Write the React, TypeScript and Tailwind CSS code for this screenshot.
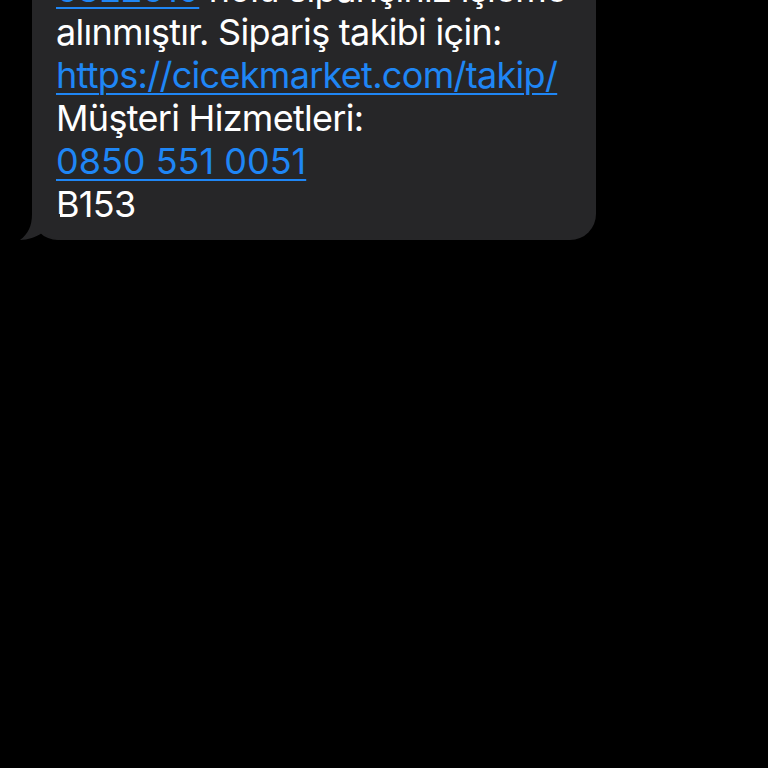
export default function App() {
  return (
    <div className="min-h-[768px] w-[768px] overflow-hidden bg-black font-['Inter',sans-serif]">
      <div className="relative ml-[32px] -mt-[42px] w-[564px] rounded-[26px] bg-[#262628] px-[24px] pt-[10px] pb-[14px] text-[36px] leading-[43px] tracking-[-0.7px] text-white">
        <p className="whitespace-nowrap">
          <a className="text-[#1f86f5] underline decoration-[2px] underline-offset-[5px]">6322610</a> nolu siparişiniz işleme
          <br />
          alınmıştır. Sipariş takibi için:
          <br />
          <a className="text-[#1f86f5] underline decoration-[2px] underline-offset-[5px]">https://cicekmarket.com/takip/</a>
          <br />
          Müşteri Hizmetleri:
          <br />
          <a className="text-[#1f86f5] tracking-[0px] underline decoration-[2px] underline-offset-[5px]">0850 551 0051</a>
          <br />
          B153
        </p>
        <svg
          className="absolute bottom-0 left-[-12px]"
          width="40"
          height="26"
          viewBox="0 0 40 26"
        >
          <path
            d="M12 0 C12 12 8 20 0 26 C8 26 16 23 22 19 C27 22 33 25 40 26 L40 0 Z"
            fill="#262628"
          />
        </svg>
      </div>
    </div>
  );
}
